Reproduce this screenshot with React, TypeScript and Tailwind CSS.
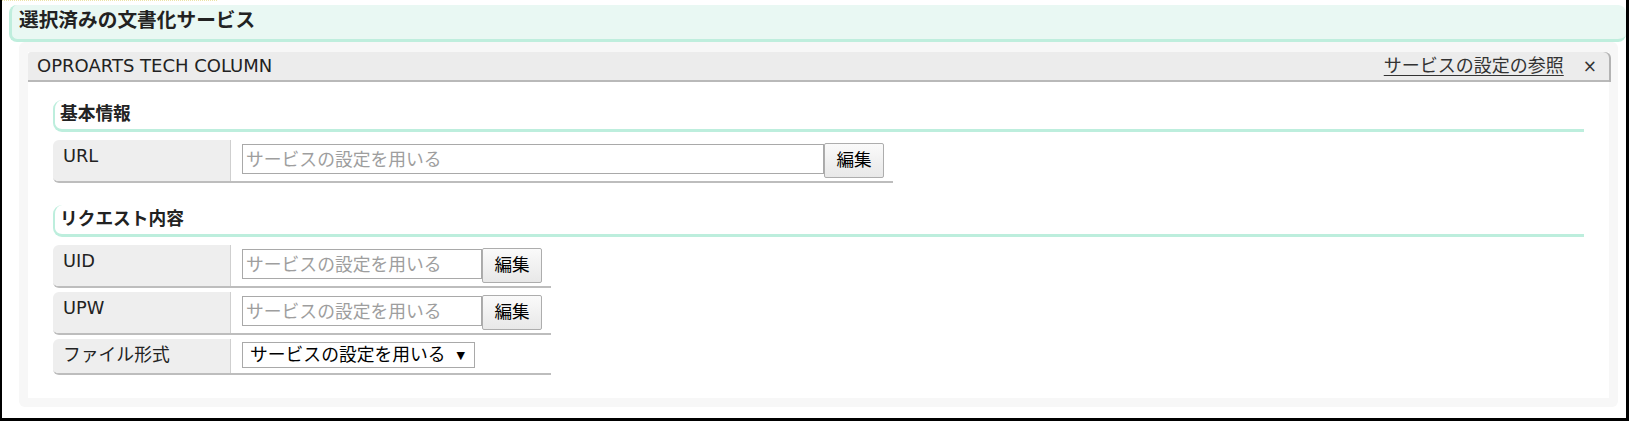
import React from "react";

function SectionHeading({ title }: { title: string }) {
  return (
    <div className="h-[32px] border-l-2 border-b-[3px] border-[#bdeedd] rounded-l-[9px] flex items-center pl-[5px] text-[17.7px] font-bold text-[#222] leading-none">
      {title}
    </div>
  );
}

function Row({
  label,
  children,
}: {
  label: string;
  children: React.ReactNode;
}) {
  return (
    <div className="flex w-fit border-b-2 border-[#bdbdbd] rounded-l-[6px] overflow-hidden">
      <div className="w-[178px] shrink-0 bg-[#eeeeee] border-r border-[#cfcfcf] pl-[10px] pt-[6px] text-[17.8px] leading-[20px] text-[#222]">
        {label}
      </div>
      <div className="flex items-start pl-[11px] pr-[9px] pt-[3px] pb-[3px] bg-white">
        {children}
      </div>
    </div>
  );
}

function TextWithEdit({ width }: { width: string }) {
  return (
    <>
      <input
        readOnly
        placeholder="サービスの設定を用いる"
        className={`${width} h-[30px] mt-[1px] border border-[#a9a9a9] bg-white px-[3px] text-[17.8px] text-[#222] placeholder:text-[#9e9e9e] outline-none`}
      />
      <button className="w-[60px] h-[35px] border border-[#adadad] rounded-[2px] bg-linear-to-b from-[#fafafa] to-[#e8e8e8] text-[17.6px] text-black leading-none">
        編集
      </button>
    </>
  );
}

export default function App() {
  return (
    <div className="w-[1629px] h-[421px] bg-white border-l-2 border-r-[3px] border-b-[3px] border-black flex flex-col font-['DejaVu_Sans','Noto_Sans_CJK_JP',sans-serif]">
      <div className="h-px w-[215px] border-t border-dotted border-[#ece3a6]" />
      <div className="mt-[4px] ml-[7px] h-[37px] shrink-0 bg-[#e9f8f3] border-l-[3px] border-b-[3px] border-[#bfeedd] rounded-[8px] flex items-center pl-[7px] pb-[2px] text-[19.7px] font-bold text-[#222] leading-none">
        選択済みの文書化サービス
      </div>
      <div className="ml-[17px] mr-[8px] mb-[11px] flex-1 bg-[#f7f7f7] rounded-[6px] pt-[10px] pl-[9px] pr-[9px] pb-[9px] flex">
        <div className="flex-1 bg-white flex flex-col">
          <div className="h-[30px] shrink-0 bg-[#ececec] border-b-2 border-[#b9b9b9] rounded-tl-[3px] rounded-tr-[6px] shadow-[2px_0_0_#b3b3b3] flex items-center pl-[9px] pr-[12px] text-[#222]">
            <span className="text-[18px] leading-none">OPROARTS TECH COLUMN</span>
            <span className="ml-auto text-[18px] leading-none underline underline-offset-[3px] text-[#333]">
              サービスの設定の参照
            </span>
            <span className="ml-[19px] text-[17px] leading-none text-[#333]">×</span>
          </div>
          <div className="px-[25px] pt-[18px] flex flex-col">
            <SectionHeading title="基本情報" />
            <div className="mt-[8px] flex flex-col gap-[4px]">
              <Row label="URL">
                <TextWithEdit width="w-[582px]" />
              </Row>
            </div>
            <div className="mt-[22px]">
              <SectionHeading title="リクエスト内容" />
            </div>
            <div className="mt-[8px] flex flex-col gap-[4px]">
              <Row label="UID">
                <TextWithEdit width="w-[240px]" />
              </Row>
              <Row label="UPW">
                <TextWithEdit width="w-[240px]" />
              </Row>
              <div className="flex w-[498px] border-b-2 border-[#bdbdbd] rounded-l-[6px] overflow-hidden">
                <div className="w-[178px] shrink-0 bg-[#eeeeee] border-r border-[#cfcfcf] pl-[10px] pt-[6px] text-[17.8px] leading-[20px] text-[#222]">
                  ファイル形式
                </div>
                <div className="flex items-start pl-[11px] pr-[9px] pt-[3px] pb-[5px] bg-white">
                  <div className="h-[26px] border border-[#a9a9a9] bg-white pl-[7px] pr-[9px] flex items-center text-[17.8px] text-black leading-none">
                    <span>サービスの設定を用いる</span>
                    <span className="ml-[11px] text-[11px]">▼</span>
                  </div>
                </div>
              </div>
            </div>
          </div>
        </div>
      </div>
    </div>
  );
}
